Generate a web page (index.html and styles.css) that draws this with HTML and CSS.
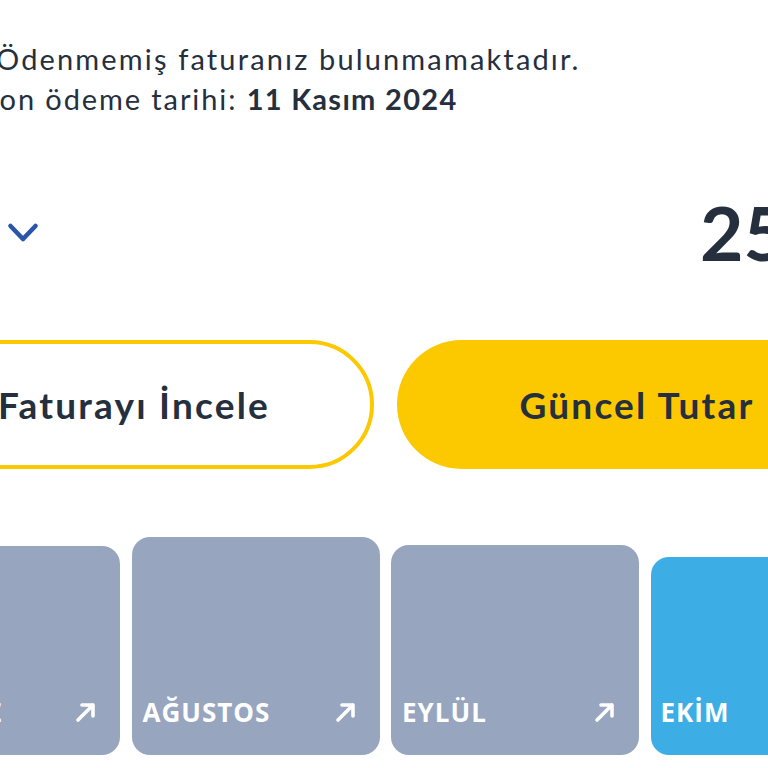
FILE: index.html
```html
<!DOCTYPE html>
<html lang="tr">
<head>
<meta charset="utf-8">
<link rel="stylesheet" href="styles.css">
</head>
<body>
<div class="page">
  <div class="info">
    <p class="line line1">Ödenmemiş faturanız bulunmamaktadır.</p>
    <p class="line line2">Son ödeme tarihi: <b>11 Kasım 2024</b></p>
  </div>
  <div class="amount-row">
    <svg class="chevron" width="32" height="22" viewBox="0 0 32 22"><path d="M3.5 4 L16 17 L28.5 4" fill="none" stroke="#2a55a8" stroke-width="4.6" stroke-linecap="round" stroke-linejoin="round"/></svg>
    <span class="amount">25</span>
  </div>
  <div class="buttons">
    <button class="btn outline">Faturayı İncele</button>
    <button class="btn solid">Güncel Tutar</button>
  </div>
  <div class="cards">
    <div class="card" style="height:209px"><div class="card-foot"><span class="label">TEMMUZ</span><svg class="arrow" width="22" height="22" viewBox="0 0 22 22"><path d="M3 19 L18 4 M7 4 H18 V15" fill="none" stroke="#fff" stroke-width="3.6" stroke-linecap="round" stroke-linejoin="round"/></svg></div></div>
    <div class="card" style="height:218px"><div class="card-foot"><span class="label">AĞUSTOS</span><svg class="arrow" width="22" height="22" viewBox="0 0 22 22"><path d="M3 19 L18 4 M7 4 H18 V15" fill="none" stroke="#fff" stroke-width="3.6" stroke-linecap="round" stroke-linejoin="round"/></svg></div></div>
    <div class="card" style="height:210px"><div class="card-foot"><span class="label">EYLÜL</span><svg class="arrow" width="22" height="22" viewBox="0 0 22 22"><path d="M3 19 L18 4 M7 4 H18 V15" fill="none" stroke="#fff" stroke-width="3.6" stroke-linecap="round" stroke-linejoin="round"/></svg></div></div>
    <div class="card current" style="height:198px"><div class="card-foot"><span class="label">EKİM</span></div></div>
  </div>
</div>
</body>
</html>
```

FILE: styles.css
```css
html, body {
  margin: 0;
  padding: 0;
  background: #ffffff;
}
body {
  width: 768px;
  height: 768px;
  overflow: hidden;
  font-family: "Lato", "Noto Sans", sans-serif;
  color: #252f3d;
}
.page {
  width: 768px;
  height: 768px;
  overflow: hidden;
  padding-top: 39px;
  box-sizing: border-box;
}
.info {
  margin-left: -18px;
}
.line {
  margin: 0;
  font-size: 29px;
  line-height: 40px;
  letter-spacing: 1.9px;
  white-space: nowrap;
}
.line1 {
  padding-left: 14px;
  letter-spacing: 2.15px;
}
.line2 b {
  font-weight: 700;
  letter-spacing: 1.3px;
}
.amount-row {
  display: flex;
  align-items: center;
  margin-top: 76px;
  height: 75px;
  white-space: nowrap;
}
.chevron {
  margin-left: 7px;
  flex: none;
}
.amount {
  margin-left: 661px;
  font-size: 75px;
  line-height: 75px;
  font-weight: 700;
  flex: none;
}
.buttons {
  display: flex;
  gap: 23px;
  margin-left: -106px;
  margin-top: 70px;
}
.btn {
  flex: none;
  width: 480px;
  height: 129px;
  border-radius: 65px;
  font-family: "Lato", "Noto Sans", sans-serif;
  font-weight: 700;
  font-size: 37px;
  letter-spacing: 2.2px;
  color: #252f3d;
  box-sizing: border-box;
  padding: 0;
}
.outline {
  background: #ffffff;
  border: 4px solid #fcc800;
}
.solid {
  background: #fcc800;
  border: none;
}
.cards {
  display: flex;
  align-items: flex-end;
  gap: 11.5px;
  margin-left: -128px;
  margin-top: 68px;
  height: 218px;
}
.card {
  flex: none;
  width: 248px;
  background: #97a5bf;
  border-radius: 18px;
  display: flex;
  flex-direction: column;
  justify-content: flex-end;
  box-sizing: border-box;
  padding: 0 23px 30px 11px;
}
.card.current {
  background: #3daee5;
  padding-left: 10px;
}
.card-foot {
  display: flex;
  align-items: center;
  justify-content: space-between;
}
.label {
  font-family: "Open Sans", "Lato", sans-serif;
  font-weight: 700;
  font-size: 26px;
  line-height: 26px;
  color: #ffffff;
  letter-spacing: 1px;
}
.arrow {
  flex: none;
}
```
